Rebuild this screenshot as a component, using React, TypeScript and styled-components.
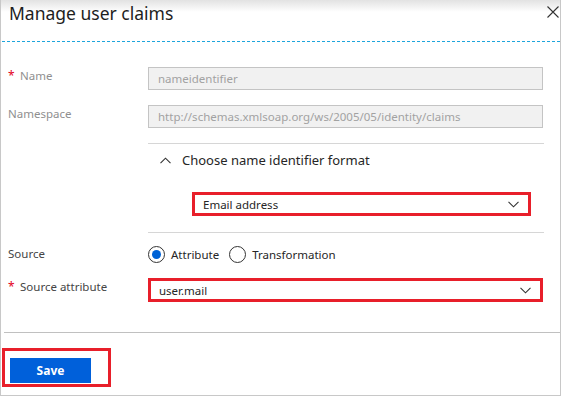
import styled, { createGlobalStyle } from "styled-components";

const GlobalStyle = createGlobalStyle`
    html, body {
        margin: 0;
        padding: 0;
        background: #fff;
    }
    body {
        font-family: "Segoe UI", "Noto Sans", "Liberation Sans", sans-serif;
    }
`

const Panel = styled.div`
    box-sizing: border-box;
    width: 561px;
    height: 396px;
    border-left: 1px solid #c8c8c8;
    border-right: 1px solid #c8c8c8;
    border-bottom: 1px solid #c8c8c8;
    background: linear-gradient(#e2e2e2 0px, #fff 12px);
    display: flex;
    flex-direction: column;
`

const Header = styled.div`
    box-sizing: border-box;
    height: 42px;
    margin-left: 1px;
    padding: 0 1px 0 7px;
    border-bottom: 1px dashed #1ea5dc;
    display: flex;
    justify-content: space-between;
    align-items: flex-start;
`

const Title = styled.h1`
    margin: 0;
    font-size: 17.5px;
    font-weight: 400;
    line-height: 26px;
    color: #1e1e1e;
`

const CloseButton = styled.div`
    width: 12px;
    height: 12px;
    margin-top: 6px;
    display: flex;
`

const Body = styled.div`
    padding: 25px 0 0 7px;
    display: flex;
    flex-direction: column;
`

const Row = styled.div<{ $gap?: number; $center?: boolean }>`
    display: flex;
    align-items: ${props => props.$center ? 'center' : 'flex-start'};
    margin-top: ${props => props.$gap ?? 0}px;
`

const Label = styled.div<{ $muted?: boolean }>`
    width: 140px;
    flex: 0 0 140px;
    font-size: 11.5px;
    line-height: 18px;
    color: ${props => props.$muted ? '#8f8f8f' : '#454545'};
    display: flex;
`

const Required = styled.span`
    color: #e3001b;
    width: 12px;
    font-size: 12px;
`

const Field = styled.div`
    width: 395px;
`

const ReadOnlyInput = styled.div`
    box-sizing: border-box;
    height: 23px;
    border: 1px solid #c4c4c4;
    background: #f1f1f1;
    padding: 0 9px;
    font-size: 11.5px;
    line-height: 21px;
    color: #a2a2a2;
    white-space: nowrap;
    overflow: hidden;
`

const Section = styled.div`
    margin-top: 15px;
    margin-left: 140px;
    width: 396px;
    border-top: 1px solid #d6d6d6;
    border-bottom: 1px solid #d6d6d6;
    padding-bottom: 16px;
`

const Toggle = styled.div`
    height: 32px;
    display: flex;
    align-items: center;
    gap: 11px;
    padding-left: 12px;
    font-size: 13px;
    color: #262626;
`

const Select = styled.div<{ $width: number; $indent?: number }>`
    box-sizing: border-box;
    width: ${props => props.$width}px;
    height: 24px;
    margin-left: ${props => props.$indent ?? 0}px;
    margin-top: ${props => props.$indent ? 16 : 0}px;
    border: 3px solid #e81f2a;
    padding: 0 9px 0 8px;
    display: flex;
    align-items: center;
    justify-content: space-between;
    font-size: 11.5px;
    color: #262626;
    background: #fff;
`

const RadioGroup = styled.div`
    display: flex;
    align-items: center;
    font-size: 11.5px;
    color: #262626;
`

const RadioOption = styled.label`
    display: flex;
    align-items: center;
    gap: 6px;
    margin-right: 10px;
`

const RadioCircle = styled.span<{ $checked?: boolean }>`
    box-sizing: border-box;
    width: 17px;
    height: 17px;
    border: 1px solid #333;
    border-radius: 50%;
    display: flex;
    align-items: center;
    justify-content: center;

    &::after {
        content: "";
        width: 9px;
        height: 9px;
        border-radius: 50%;
        background: ${props => props.$checked ? '#0063d6' : 'transparent'};
    }
`

const Footer = styled.div`
    margin-top: auto;
    margin-left: 3px;
    border-top: 1px solid #c0c0c0;
    padding: 15px 0 8px 0;
`

const Highlight = styled.div`
    display: inline-block;
    margin-left: -2px;
    border: 3px solid #e81f2a;
    padding: 7px 17px 1px 5px;
`

const SaveButton = styled.button`
    display: block;
    width: 81px;
    height: 25px;
    border: none;
    background: #0060da;
    color: #fff;
    font-family: inherit;
    font-size: 12px;
    font-weight: 700;
    padding: 0;
`

const ChevronDown = () => (
    <svg width="11" height="7" viewBox="0 0 11 7">
        <polyline points="0.5,0.8 5.5,5.8 10.5,0.8" fill="none" stroke="#333" strokeWidth="1.1" />
    </svg>
)

const App = () => {
    return (
        <>
            <GlobalStyle />
            <Panel>
                <Header>
                    <Title>Manage user claims</Title>
                    <CloseButton>
                        <svg width="12" height="12" viewBox="0 0 12 12">
                            <path d="M0.5 0.5 L11.5 11.5 M11.5 0.5 L0.5 11.5" stroke="#333" strokeWidth="1.1" />
                        </svg>
                    </CloseButton>
                </Header>
                <Body>
                    <Row>
                        <Label $muted><Required>*</Required>Name</Label>
                        <Field><ReadOnlyInput>nameidentifier</ReadOnlyInput></Field>
                    </Row>
                    <Row $gap={15}>
                        <Label $muted>Namespace</Label>
                        <Field>
                            <ReadOnlyInput>http://schemas.xmlsoap.org/ws/2005/05/identity/claims</ReadOnlyInput>
                        </Field>
                    </Row>
                    <Section>
                        <Toggle>
                            <svg width="11" height="7" viewBox="0 0 11 7">
                                <polyline points="0.5,6.2 5.5,1.2 10.5,6.2" fill="none" stroke="#333" strokeWidth="1.1" />
                            </svg>
                            Choose name identifier format
                        </Toggle>
                        <Select $width={339} $indent={44}>
                            Email address
                            <ChevronDown />
                        </Select>
                    </Section>
                    <Row $gap={12} $center>
                        <Label>Source</Label>
                        <RadioGroup>
                            <RadioOption><RadioCircle $checked />Attribute</RadioOption>
                            <RadioOption><RadioCircle />Transformation</RadioOption>
                        </RadioGroup>
                    </Row>
                    <Row $gap={15}>
                        <Label><Required>*</Required>Source attribute</Label>
                        <Select $width={395}>
                            user.mail
                            <ChevronDown />
                        </Select>
                    </Row>
                </Body>
                <Footer>
                    <Highlight>
                        <SaveButton>Save</SaveButton>
                    </Highlight>
                </Footer>
            </Panel>
        </>
    )
}

export default App;
